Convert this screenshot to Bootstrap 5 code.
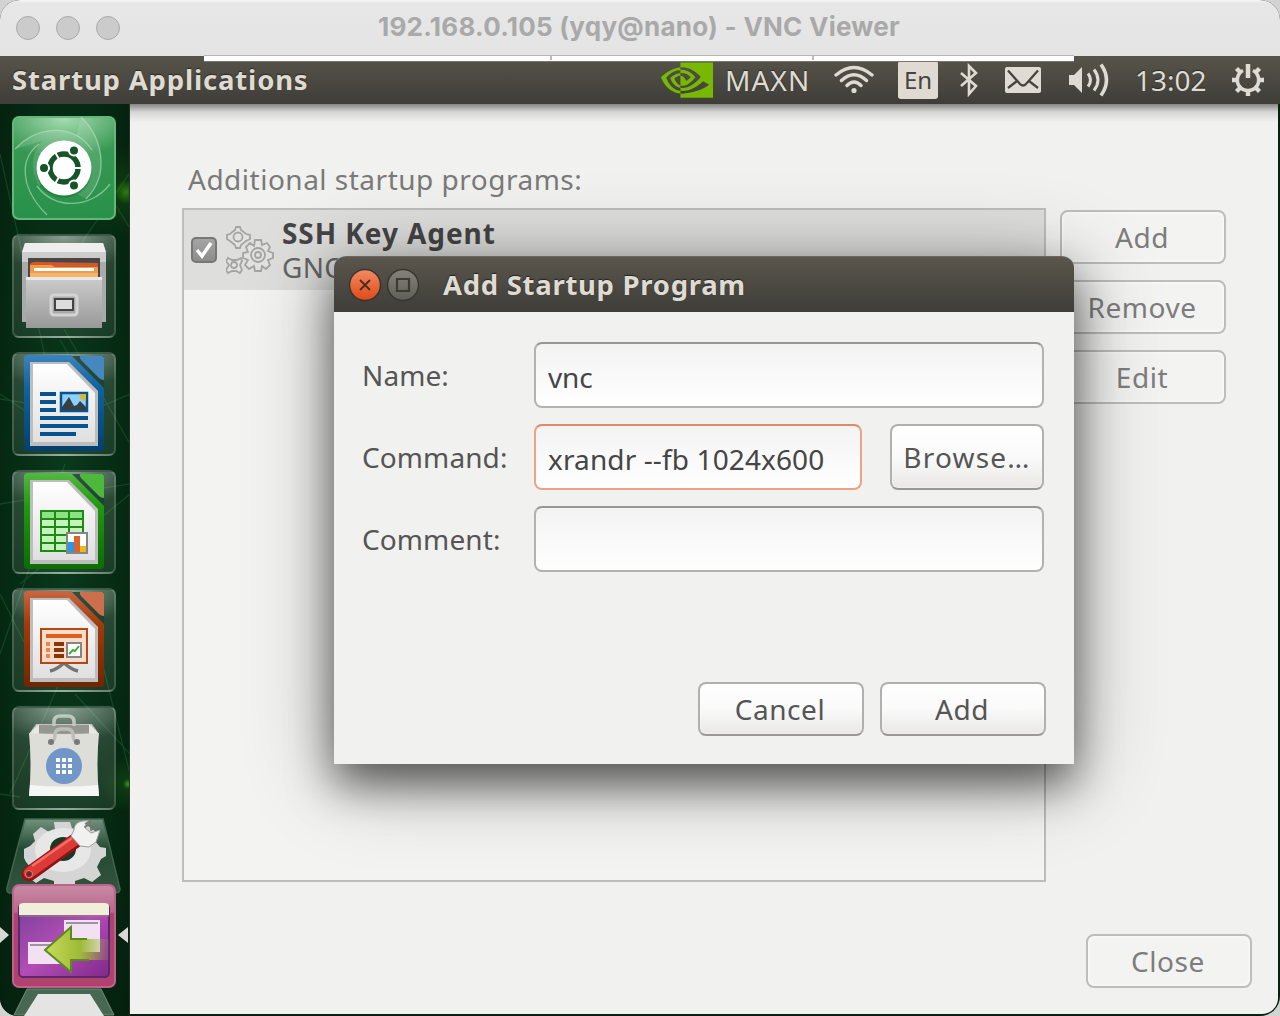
<!DOCTYPE html>
<html lang="en">
<head>
<meta charset="utf-8">
<title>192.168.0.105 (yqy@nano) - VNC Viewer</title>
<link href="https://cdn.jsdelivr.net/npm/bootstrap@5.3.0/dist/css/bootstrap.min.css" rel="stylesheet">
<style>
html,body{height:100%}
body{margin:0;background:#d3d3d3;font-family:"Noto Sans","Open Sans",sans-serif;font-size:28px;line-height:36px;color:#4c4c4c;overflow:hidden}
.viewer{width:1280px;height:1016px;border-radius:20px 20px 20px 18px;background:#06200f}
.viewer-title{height:56px;background:linear-gradient(#f6f6f6 0,#e7e7e7 3px,#e4e4e4);padding-left:16px}
.viewer-title span{font-family:Inter,sans-serif;font-weight:700;font-size:26px;color:#a9a9a9;letter-spacing:.25px;margin-left:258px;line-height:52px;margin-top:-2px}
.dot{width:24px;height:24px;border-radius:50%;background:#cbcbcb;border:1px solid #aaa}
.vnc-handle{left:204px;top:55px;width:870px;height:7px;background:#fff;border-top:1px solid #b5b5b5;border-bottom:1px solid #777;z-index:4}
.vnc-handle i{position:absolute;top:0;width:2px;height:4px;background:#bbb}
.panel{height:48px;background:linear-gradient(#57544a,#3e3d38);color:#dfdbd2;padding-left:12px;text-shadow:0 -1px 1px #2a2925}
.panel svg{flex:none}
.panel-title{font-weight:700;font-size:27.5px;letter-spacing:.82px}
.lang{width:40px;height:38px;background:#dfdbd2;color:#45443e;border-radius:3px;font-size:24px;line-height:38px;text-shadow:none}
.launcher{width:130px;padding:12px 0 0 12px;background:
 radial-gradient(circle at 126px 88px,#2a7a10 0,#17510f66 12px,transparent 46px),
 radial-gradient(circle at 128px 680px,#3a9a18 0,#1b5a1066 5px,transparent 28px),
 radial-gradient(ellipse at 50% 45%,#0a3a1d 0,#062c14 55%,#04200d 100%);overflow:hidden;border-bottom-left-radius:18px;border-right:1px solid #26332a}
.rays{left:0;top:0;z-index:0}
.tile{width:104px;height:104px;border-radius:7px;margin-bottom:14px;position:relative;flex:none;border:2px solid #ffffff28;background:radial-gradient(ellipse 70px 36px at 50% 0,#ffffff70,transparent),linear-gradient(#ffffff28,#ffffff14)}
.tile svg{display:block;margin:-2px}
.tile-dash{background:radial-gradient(ellipse 70px 40px at 50% 0,#a5dcb0,transparent),linear-gradient(#3e9b57,#28914a);border-color:#65b67c}
.tile-pink{background:linear-gradient(#c889a4 0,#b9688b 26px,#a94473 28px,#b2416f);border-color:#bd6289;margin:0 0 2px}
.desk{background:#f1f1ef;margin-right:2px;margin-bottom:2px;border-bottom-right-radius:16px;padding:56px 0 0 52px;background-image:linear-gradient(#858585,#d5d5d3 8px,#f1f1ef 18px)}
.desk-label{color:#7a7a7a;padding-left:6px;height:48px;line-height:38px;letter-spacing:.5px}
.list-box{width:864px;height:674px;border:2px solid #bebdbb;background:#f3f3f1}
.list-item{height:80px;background:#dededd;padding-left:7px}
.list-item b{display:block;color:#454545;letter-spacing:.93px}
.tick{width:26px;height:26px;border-radius:5px;background:linear-gradient(#a5a5a5,#8c8c8c);border:2px solid #777}
.btn-gtk{width:166px;height:54px;padding:0 2px 0 0;border:2px solid #b0b0af;border-bottom-color:#989896;border-radius:8px;font-size:28px;line-height:48px;color:#555;letter-spacing:.55px;background:linear-gradient(#fff,#fafafa 50%,#e9e8e7);box-shadow:inset 0 0 2px #fff}
.btn-browse{width:154px;height:66px;letter-spacing:1.2px;padding:0}
.btn-dim{color:#7d7d7d;background:#f3f3f2;border-color:#bdbdbc;box-shadow:inset 0 0 4px #fff}
.dialog-win{left:334px;top:256px;width:740px;height:508px;border-radius:12px 12px 0 0;background:#f1f1ef;box-shadow:0 20px 44px rgba(0,0,0,.56),0 12px 90px rgba(0,0,0,.3);z-index:5}
.dialog-bar{height:56px;border-radius:12px 12px 0 0;background:linear-gradient(#5a564d,#3e3d38);border-top:1px solid #6c685e;color:#dfdbd2;padding-left:15px;text-shadow:0 -1px 1px #222}
.dialog-bar b{margin-left:24px;font-size:27.5px;letter-spacing:.7px}
.dialog-form{padding:30px 30px 0 28px;gap:16px}
.form-label-gtk{width:172px;color:#555;letter-spacing:.1px}
.entry{height:66px;padding:3px 12px 0;font-size:28px;border:2px solid #b2b2b2;border-top-color:#979797;border-radius:8px;background:linear-gradient(#f3f3f3,#fff);color:#454545;letter-spacing:-.2px}
.entry-active{border-color:#eda283;border-top-color:#df8a68;letter-spacing:.12px}
</style>
<script src="https://cdn.jsdelivr.net/npm/bootstrap@5.3.0/dist/js/bootstrap.bundle.min.js"></script>
</head>
<body>
<div class="viewer position-relative overflow-hidden d-flex flex-column">
 <header class="viewer-title d-flex align-items-center flex-shrink-0">
  <div class="d-flex" style="gap:16px"><div class="dot"></div><div class="dot"></div><div class="dot"></div></div>
  <span class="text-nowrap">192.168.0.105 (yqy@nano) - VNC Viewer</span>
 </header>
 <div class="vnc-handle position-absolute"><i style="left:346px"></i><i style="left:608px"></i></div>
 <nav class="panel d-flex align-items-center flex-shrink-0">
  <div class="panel-title text-nowrap">Startup Applications</div>
  <div class="d-flex align-items-center ms-auto" style="padding-right:15px">
   <svg width="52" height="36" viewBox="0 3.8 24 16.3" preserveAspectRatio="none"><path fill="#76b900" d="M8.948 8.798v-1.43a6.7 6.7 0 0 1 .424-.018c3.922-.124 6.493 3.374 6.493 3.374s-2.774 3.851-5.75 3.851c-.398 0-.787-.062-1.158-.185v-4.346c1.528.185 1.837.857 2.747 2.385l2.04-1.714s-1.492-1.952-4-1.952a6.016 6.016 0 0 0-.796.035m0-4.735v2.138l.424-.027c5.45-.185 9.01 4.47 9.01 4.47s-4.08 4.964-8.33 4.964c-.37 0-.733-.035-1.095-.097v1.325c.3.035.61.062.91.062 3.957 0 6.82-2.023 9.593-4.408.459.371 2.34 1.263 2.73 1.652-2.633 2.208-8.772 3.984-12.253 3.984-.335 0-.653-.018-.971-.053v1.864H24V4.063zm0 10.326v1.131c-3.657-.654-4.673-4.46-4.673-4.46s1.758-1.944 4.673-2.262v1.237H8.94c-1.528-.186-2.73 1.245-2.73 1.245s.68 2.412 2.739 3.11M2.456 10.9s2.164-3.197 6.5-3.533V6.201C4.153 6.59 0 10.653 0 10.653s2.35 6.802 8.948 7.42v-1.237c-4.84-.6-6.492-5.936-6.492-5.936z"/></svg>
   <span style="width:85px;margin-left:12px;letter-spacing:1.1px">MAXN</span>
   <svg style="margin-left:22px" width="44" height="30" viewBox="0 0 44 30" fill="none" stroke="#dfdbd2" stroke-width="3.4" stroke-linecap="round"><path d="M4 10Q22-5 40 10M9.500 15.500Q22 4 34.500 15.500M15 20.500Q22 13.500 29 20.500"/><circle cx="22" cy="25.500" r="2.600" fill="#dfdbd2" stroke="none"/></svg>
   <span class="lang text-center" style="margin-left:22px">En</span>
   <svg style="margin-left:21px" width="20" height="34" viewBox="0 0 20 34" fill="none" stroke="#dfdbd2" stroke-width="2.600"><path d="M2 10 17 23 10 31V3l7 7L2 23"/></svg>
   <svg style="margin-left:25px" width="38" height="26" viewBox="0 0 38 26"><rect x="1" y="0" width="36" height="26" rx="2" fill="#dfdbd2"/><path d="M4 3.500 16 17q3 3 6 0L34 3.500M4 21l9-7M34 21l-9-7" fill="none" stroke="#45443e" stroke-width="2.300"/></svg>
   <svg style="margin-left:26px" width="42" height="36" viewBox="0 0 42 36" fill="none" stroke="#dfdbd2" stroke-width="3"><path d="M1 13h5l8-8v26l-8-8H1z" fill="#dfdbd2" stroke="none"/><path d="M20 11.500Q25 18 20 24.500M26 7.500Q34 18 26 28.500" /><path d="M33 2.500Q44 18 33 33.500" stroke-width="3.600"/></svg>
   <span class="text-end text-nowrap" style="width:71px;margin-left:25px">13:02</span>
   <svg style="margin-left:25px" width="34" height="34" viewBox="-17 -17 34 34" fill="none" stroke="#dfdbd2"><path d="M-5-9.500A10.700 10.700 0 1 0 5-9.500" stroke-width="3.600"/><path d="M0-16V-2" stroke-width="4.500"/><path d="M11 0h5M-11 0h-5M0 11v5M8 8l3.500 3.500M-8 8l-3.500 3.500M8-8l3.500-3.500M-8-8l-3.500-3.500" stroke-width="4.400"/></svg>
  </div>
 </nav>
 <div class="d-flex flex-grow-1" style="min-height:0">
  <aside class="launcher position-relative d-flex flex-column flex-shrink-0">
   <svg class="rays position-absolute" width="130" height="912" fill="none" stroke="#4fae63" stroke-opacity=".2" stroke-width="1.300"><path d="M129 70 84 135 60 190M105 84l25 40M0 290 60 330M60 236l14 24M0 400l130-20M64 225l66 115M0 295l65 10M0 50 60 320 130 290M0 550 65 360M130 390 20 480M0 490 35 560M10 690l80-180 40 160M0 690l20 3M75 590l55 60"/></svg>
   <div class="tile tile-dash"><svg width="104" height="104"><g fill="none" stroke="#b8e3c0" stroke-opacity=".6" stroke-width="1.300"><path d="M3 33C25 10 61 6 80 34M69 1c22 21 29 58 5 82M98 68C80 92 43 95 25 70M35 99C8 72 7 43 27 28"/></g><path d="M3 33C25 10 61 6 80 34L52 52 27 70C17 50 20 37 30 25zM69 1c22 21 29 58 5 82L52 70z" fill="#fff" opacity=".13"/><circle cx="52" cy="54" r="28" fill="#146c2b" opacity=".4"/><circle cx="52" cy="52" r="27.500" fill="#fff"/><circle cx="52" cy="52" r="14" fill="none" stroke="#155527" stroke-width="5.500"/><g stroke="#fff" stroke-width="2"><path d="M52 52h18M52 52l-9-16M52 52l-9 16"/></g><circle cx="52" cy="52" r="11" fill="#fff"/><g fill="#155527" stroke="#fff" stroke-width="2"><circle cx="32" cy="52" r="5"/><circle cx="62" cy="34.500" r="5"/><circle cx="62" cy="69.500" r="5"/></g></svg></div>
   <div class="tile"><svg width="104" height="104"><defs><linearGradient id="cab" x2="0" y2="1"><stop stop-color="#ccc"/><stop offset="1" stop-color="#999"/></linearGradient></defs><path d="M10 18 13 9h78l3 9v70H10z" fill="#aaa"/><path d="M10 18 13 9h78l3 9z" fill="#eee"/><path d="M10 18h84v10H10z" fill="#ccc"/><path d="M16 24h72v20H16z" fill="#4b4645"/><path d="M18 30q2-3 10-2l58 1v15H18z" fill="#cf5a2e"/><path d="M18 31h21l4 2h43v11H18z" fill="#f19a48"/><path d="M22 34h60v3H22z" fill="#fff"/><path d="M18 39h68v6H18z" fill="#f2b56d"/><path d="M14 43h76v51H14z" fill="url(#cab)"/><path d="M14 43h76v3H14z" fill="#e8e8e8"/><rect x="39" y="61" width="26" height="20" rx="3" fill="#aaa" stroke="#d4d4d4" stroke-width="3"/><rect x="43" y="65" width="18" height="11" fill="#ddd" stroke="#444" stroke-width="2"/></svg></div>
   <div class="tile"><svg width="104" height="104"><defs><linearGradient id="wr" x2="0" y2="1"><stop stop-color="#3b83bd"/><stop offset=".35" stop-color="#10629e"/><stop offset="1" stop-color="#04406f"/></linearGradient><linearGradient id="pg" x2="0" y2="1"><stop stop-color="#fff"/><stop offset="1" stop-color="#e0e0e0"/></linearGradient></defs><path d="M58 4h34v34z" fill="#1d3f32" opacity=".8"/><path d="M12 7q0-3 4-3h43l33 33v60q0 3-4 3H16q-4 0-4-3z" transform="translate(0 -1)" fill="url(#wr)"/><path d="M18 10h39l29 29v55H18z" fill="#bdbdbd"/><path d="M21 12h34l28 29v49H21z" fill="url(#pg)"/><path d="M68 4h22q2 0 2 2v22q-3 0-5-2L69 8q-2-2-1-4z" fill="#4488bd"/><path d="M28 42h16M28 50h16M28 58h16M28 66h48M28 74h48M28 82h36" stroke="#075390" stroke-width="4"/><rect x="49" y="41" width="26" height="18" fill="#8ed0fa" stroke="#075390" stroke-width="2.500"/><path d="M50 55l7-10 5 9 3-1 3-4 6 6v3H50z" fill="#363f46"/><path d="M67 42h7v7q-6 0-7-7z" fill="#d5b839"/></svg></div>
   <div class="tile"><svg width="104" height="104"><defs><linearGradient id="ca" x2="0" y2="1"><stop stop-color="#54b842"/><stop offset=".35" stop-color="#20980e"/><stop offset="1" stop-color="#0c6d04"/></linearGradient></defs><path d="M58 4h34v34z" fill="#1d3f32" opacity=".8"/><path d="M12 7q0-3 4-3h43l33 33v60q0 3-4 3H16q-4 0-4-3z" transform="translate(0 -1)" fill="url(#ca)"/><path d="M18 10h39l29 29v55H18z" fill="#bdbdbd"/><path d="M21 12h34l28 29v49H21z" fill="url(#pg)"/><path d="M68 4h22q2 0 2 2v22q-3 0-5-2L69 8q-2-2-1-4z" fill="#4eb83c"/><path d="M29 41h42v40H29z" fill="#c6f3bd"/><path d="M29 41h42v7H29z" fill="#8de083"/><path d="M29 41h42v40H29zM29 49h42M29 57h42M29 65h42M29 73h42M43 41v40M57 41v40" fill="none" stroke="#1c8b12" stroke-width="2"/><rect x="55" y="63" width="20" height="20" fill="#fff" stroke="#858585" stroke-width="2"/><path d="M56 72h6v10h-6z" fill="#2898ea"/><path d="M62 66h6v16h-6z" fill="#db642d"/><path d="M68 76h6v6h-6z" fill="#edb91d"/></svg></div>
   <div class="tile"><svg width="104" height="104"><defs><linearGradient id="im" x2="0" y2="1"><stop stop-color="#c76642"/><stop offset=".35" stop-color="#a13a0a"/><stop offset="1" stop-color="#702600"/></linearGradient></defs><path d="M58 4h34v34z" fill="#1d3f32" opacity=".8"/><path d="M12 7q0-3 4-3h43l33 33v60q0 3-4 3H16q-4 0-4-3z" transform="translate(0 -1)" fill="url(#im)"/><path d="M18 10h39l29 29v55H18z" fill="#bdbdbd"/><path d="M21 12h34l28 29v49H21z" fill="url(#pg)"/><path d="M68 4h22q2 0 2 2v22q-3 0-5-2L69 8q-2-2-1-4z" fill="#cc704b"/><path d="M38 83q6-1 14-8 8 7 14 8" fill="none" stroke="#747474" stroke-width="3.500"/><rect x="29" y="41" width="46" height="34" fill="#fadccb" stroke="#b54716" stroke-width="2"/><path d="M34 48h36" stroke="#d9601f" stroke-width="4"/><path d="M34 56h4M34 62h4M34 68h4" stroke="#e78652" stroke-width="4"/><path d="M42 56h10M42 62h10M42 68h10" stroke="#8c3406" stroke-width="4"/><rect x="55" y="55" width="14" height="14" fill="#fff" stroke="#858585" stroke-width="2"/><path d="m57 66 4-4 2 1 4-5" fill="none" stroke="#3eae36" stroke-width="2"/></svg></div>
   <div class="tile"><svg width="104" height="104"><path d="M24 18h56l7 10H17z" fill="#c4c4c0"/><path d="M27 19h50v9H27z" fill="#969693"/><path d="M17 28 27 18v10M87 28 77 18v10" fill="#e8e8e4"/><path d="M42 20v-4q0-6 6-6h8q6 0 6 6v4" fill="none" stroke="#bfc8bc" stroke-width="3.500"/><path d="M17 27q35 2 70 0-3 31 0 63H17q3-32 0-63z" fill="#deded9"/><path d="M18 79q34 3 68 0l1 11H17z" fill="#f6f6f4"/><path d="M40 36q3-2 3-8 1-5 6-5h6q5 0 6 5 0 6 3 8" fill="none" stroke="#bdbdb9" stroke-width="3.500"/><circle cx="39" cy="36" r="3" fill="#777"/><circle cx="65" cy="36" r="3" fill="#777"/><circle cx="52" cy="60" r="18" fill="#7097c8"/><path d="M44 52h4v4h-4zM50 52h4v4h-4zM56 52h4v4h-4zM44 58h4v4h-4zM50 58h4v4h-4zM56 58h4v4h-4zM44 64h4v4h-4zM50 64h4v4h-4zM56 64h4v4h-4z" fill="#fff"/></svg></div>
   <svg class="flex-shrink-0 position-relative" style="margin:-6px 0 -12px -6px" width="118" height="78" viewBox="0 0 118 78"><defs><linearGradient id="fold" x2="0" y2="1"><stop stop-color="#72927d"/><stop offset=".4" stop-color="#234a32"/><stop offset="1" stop-color="#345440"/></linearGradient></defs><path d="M19 1h78l17 70q0 4-5 4H5q-5 0-4-5z" fill="url(#fold)" stroke="#456351" stroke-width="1.500"/><path fill="#d5d5d5" d="M48 4h16l2 6 9 3 7-5 11 8-4 7 5 6 6 1v8l-5 3-4 8 4 8-9 7-8-4-9 3v11H48V63l-10-3-8 5-9-7 4-8-5-6-2-4v-9l6-3 5-5-2-7 8-7 8 5 6-2z"/><ellipse cx="57" cy="32" rx="28" ry="22" fill="#e7e7e7"/><ellipse cx="57" cy="31" rx="13" ry="12" fill="#163b25"/><path d="m23 56 46-33" stroke="#8f1417" stroke-width="15" stroke-linecap="round"/><path d="m23 55 46-33" stroke="#dc3937" stroke-width="11" stroke-linecap="round"/><path d="m26 48 40-28" stroke="#f17069" stroke-width="2.500"/><path d="m65 18 9 10 9 1 7-5 4-12-9 3-7-6 5-6c-10-1-15 3-15 9z" fill="#f1f1ef" stroke="#9e9e9e"/><path d="M79 6l5-3 1 9 8-4" fill="none" stroke="#777" stroke-width="1.500"/><circle cx="23" cy="56" r="3.500" fill="#692828" stroke="#f37d76"/></svg>
   <div class="tile tile-pink"><svg width="104" height="104"><defs><linearGradient id="pu" x2="1" y2="1"><stop stop-color="#784199"/><stop offset=".5" stop-color="#b34db6"/><stop offset="1" stop-color="#80298a"/></linearGradient><linearGradient id="arr"><stop stop-color="#c8dc59"/><stop offset=".55" stop-color="#9dba36"/><stop offset="1" stop-color="#9dba36" stop-opacity=".1"/></linearGradient></defs><rect x="7" y="20" width="90" height="73" rx="4" fill="url(#pu)" stroke="#5b286c" stroke-width="2"/><path d="M7 22q0-3 4-3h82q4 0 4 3v9H7z" fill="#f0efd9"/><path d="M7 32h90" stroke="#8f8a75"/><path d="M52 36h36v32H52zM16 58h36v22H16z" fill="#f1e1f3"/><path d="M54 39h32M18 61h32" stroke="#817a87" stroke-width="1.500"/><path d="M33 66 59 43v12h38v21H59v12z" fill="url(#arr)"/><path d="M75 55H59V43L33 66l26 22V76h18" fill="none" stroke="#5b8922" stroke-width="2"/></svg></div>
   <svg class="flex-shrink-0 position-relative" style="margin-top:-2px" width="104" height="28"><path d="M15 1h74l13 26H2z" fill="#476954" stroke="#718d7a"/><path d="M26 6h52l14 22H12z" fill="#e4e4e2"/></svg>
   <svg class="position-absolute" style="left:0;top:821px" width="130" height="20"><path d="M0 2l9 8-9 8zM128 2l-10 8 10 8z" fill="#d8d8d5"/></svg>
  </aside>
  <main class="desk flex-grow-1 d-flex flex-column">
   <div class="desk-label">Additional startup programs:</div>
   <div class="d-flex" style="gap:14px">
    <div class="list-box">
     <div class="list-item d-flex align-items-center">
      <div class="tick"><svg class="d-block" width="22" height="22" viewBox="0 0 22 22"><path d="m4 11 5 6L18 4" fill="none" stroke="#fff" stroke-width="3.500"/></svg></div>
      <svg style="margin-left:9px" width="48" height="50" viewBox="0 0 48 50" fill="#e2e2e1" stroke="#a4a4a3" stroke-width="1.800"><path d="M10 2h4l1 3 5 4 4 1v4l-4 2-5 4-1 3h-4l-1-3-5-4-3-2v-4l3-1 5-4z"/><circle cx="12" cy="12" r="4.500"/><path d="M29 15h6l1 5 5-2 3 4-2 4 5 2v5l-5 2 2 5-4 4-4-3-1 5h-6l-1-5-5 3-4-4 3-5-5-2v-5l5-1-2-5 4-4 4 3z"/><circle cx="32" cy="30" r="7"/><circle cx="32" cy="30" r="3"/><path d="m2 33 4 2h5l4-2 1 3-2 4 2 5-2 3-4-2H6l-4 2-2-3 3-5-3-4z"/><circle cx="8" cy="40" r="3"/></svg>
      <div style="margin-left:8px;line-height:34px"><b>SSH Key Agent</b><span style="color:#666;letter-spacing:.3px">GNO</span></div>
     </div>
    </div>
    <div class="d-flex flex-column" style="gap:16px;padding-top:2px">
     <button class="btn btn-gtk btn-dim">Add</button>
     <button class="btn btn-gtk btn-dim">Remove</button>
     <button class="btn btn-gtk btn-dim">Edit</button>
    </div>
   </div>
   <div class="mt-auto d-flex justify-content-end" style="padding:0 26px 26px"><button class="btn btn-gtk btn-dim">Close</button></div>
  </main>
 </div>
 <section class="dialog-win position-absolute">
  <header class="dialog-bar d-flex align-items-center">
   <svg width="70" height="34" viewBox="0 0 70 34"><defs><linearGradient id="cl" x2="0" y2="1"><stop stop-color="#f58a62"/><stop offset="1" stop-color="#df4a17"/></linearGradient><linearGradient id="mx" x2="0" y2="1"><stop stop-color="#858279"/><stop offset="1" stop-color="#5f5e57"/></linearGradient></defs><circle cx="16" cy="17" r="15.500" fill="url(#cl)" stroke="#37352f" stroke-width="1.500"/><path d="m11 12 10 10M21 12 11 22" stroke="#4a2d22" stroke-width="1.800"/><circle cx="54" cy="17" r="15.500" fill="url(#mx)" stroke="#37352f" stroke-width="1.500"/><path d="M48 11h12v12H48z" fill="none" stroke="#3b3a35" stroke-width="2.200"/></svg>
   <b class="text-nowrap">Add Startup Program</b>
  </header>
  <form class="dialog-form d-flex flex-column">
   <div class="d-flex align-items-center"><label class="form-label-gtk">Name:</label><input class="form-control entry flex-grow-1" style="width:auto" value="vnc"></div>
   <div class="d-flex align-items-center"><label class="form-label-gtk">Command:</label><input class="form-control entry entry-active" style="width:328px" value="xrandr --fb 1024x600"><button type="button" class="btn btn-gtk btn-browse ms-auto">Browse…</button></div>
   <div class="d-flex align-items-center"><label class="form-label-gtk">Comment:</label><input class="form-control entry flex-grow-1" style="width:auto" value=""></div>
   <div class="d-flex justify-content-end" style="gap:16px;margin-top:94px;margin-right:-2px"><button type="button" class="btn btn-gtk">Cancel</button><button type="button" class="btn btn-gtk">Add</button></div>
  </form>
 </section>
</div>
</body>
</html>
